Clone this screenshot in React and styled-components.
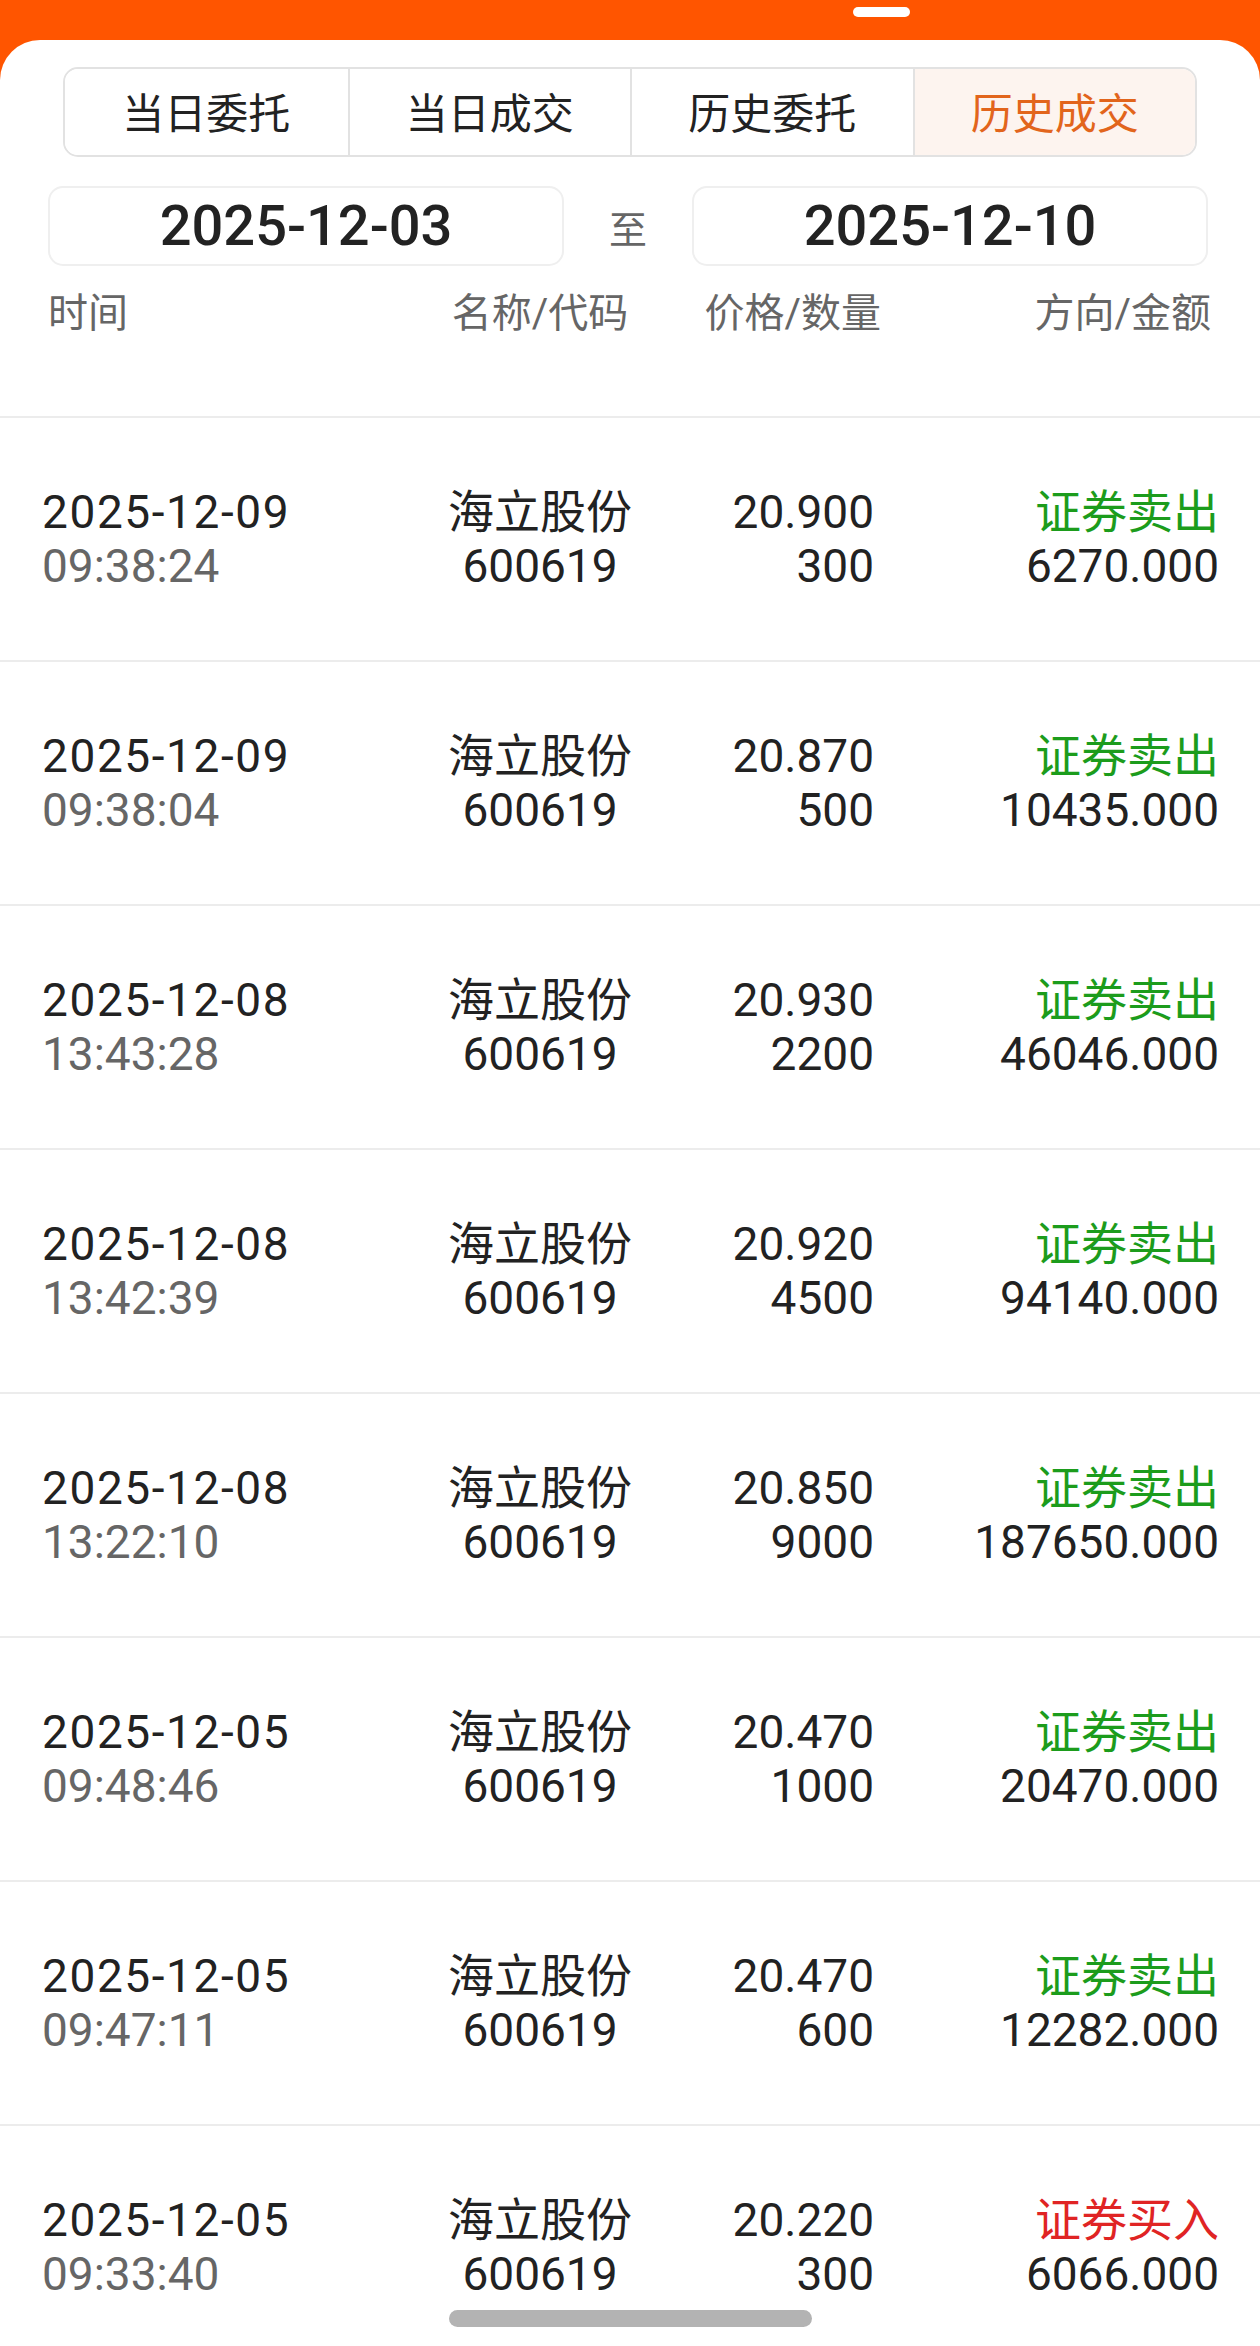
import styled, { createGlobalStyle } from 'styled-components';

const GlobalStyle = createGlobalStyle`
  html, body {
    margin: 0;
    padding: 0;
    height: 2346px;
    overflow: hidden;
    background: #ff5500;
  }
  * {
    box-sizing: border-box;
  }
`;

const Page = styled.div`
  font-family: Roboto, "Noto Sans CJK SC", sans-serif;
  width: 1260px;
  height: 2346px;
  overflow: hidden;
  background: #ff5500;
`;

const TopBar = styled.div`
  height: 40px;
  padding: 7px 0 0 853px;
`;

const Handle = styled.div`
  width: 57px;
  height: 10px;
  border-radius: 5px;
  background: #fff;
`;

const Card = styled.div`
  background: #fff;
  border-radius: 40px 40px 0 0;
  min-height: 2306px;
  padding-top: 27px;
`;

const Tabs = styled.div`
  margin: 0 63px;
  height: 90px;
  display: grid;
  grid-template-columns: repeat(4, 1fr);
  border: 2px solid #e2e2e2;
  border-radius: 15px;
  overflow: hidden;
`;

const Tab = styled.div`
  display: flex;
  align-items: center;
  justify-content: center;
  padding-bottom: 3px;
  font-size: 42px;
  color: ${p => (p.$active ? '#e2651c' : '#222')};
  background: ${p => (p.$active ? '#fdf4ef' : '#fff')};
  & + & {
    border-left: 2px solid #e2e2e2;
  }
`;

const DateRow = styled.div`
  margin: 29px 52px 0 48px;
  height: 80px;
  display: flex;
  align-items: center;
`;

const DateBox = styled.div`
  flex: 1;
  height: 80px;
  border: 2px solid #efefef;
  border-radius: 15px;
  display: flex;
  align-items: center;
  justify-content: center;
  font-size: 56px;
  font-weight: 500;
  color: #222;
`;

const To = styled.div`
  width: 128px;
  text-align: center;
  font-size: 38px;
  color: #666;
`;

const Header = styled.div`
  height: 152px;
  padding: 28px 49px 0 48px;
  display: grid;
  grid-template-columns: 372px 240px 221px 1fr;
  align-items: start;
  border-bottom: 2px solid #ececec;
  font-size: 40px;
  color: #666;
`;

const Cell = styled.div`
  text-align: ${p => p.$align || 'left'};
  line-height: ${p => p.$lh || '54px'};
`;

const Row = styled.div`
  height: 244px;
  padding: 0 41px 0 42px;
  display: grid;
  grid-template-columns: 378px 240px 214px 1fr;
  align-items: center;
  border-bottom: 2px solid #ececec;
  font-size: 46px;
  color: #222;
`;

const Day = styled.div`
  letter-spacing: 1.6px;
`;

const Sub = styled.div`
  color: ${p => p.$color || 'inherit'};
`;

const HomeBar = styled.div`
  position: fixed;
  left: 449px;
  bottom: 19px;
  width: 363px;
  height: 17px;
  border-radius: 9px;
  background: #b3b3b3;
`;

const trades = [
  ['2025-12-09', '09:38:24', '20.900', '300', 'sell', '6270.000'],
  ['2025-12-09', '09:38:04', '20.870', '500', 'sell', '10435.000'],
  ['2025-12-08', '13:43:28', '20.930', '2200', 'sell', '46046.000'],
  ['2025-12-08', '13:42:39', '20.920', '4500', 'sell', '94140.000'],
  ['2025-12-08', '13:22:10', '20.850', '9000', 'sell', '187650.000'],
  ['2025-12-05', '09:48:46', '20.470', '1000', 'sell', '20470.000'],
  ['2025-12-05', '09:47:11', '20.470', '600', 'sell', '12282.000'],
  ['2025-12-05', '09:33:40', '20.220', '300', 'buy', '6066.000'],
];

const tabs = ['当日委托', '当日成交', '历史委托', '历史成交'];

function App() {
  return (
    <Page>
      <GlobalStyle />
      <TopBar><Handle /></TopBar>
      <Card>
        <Tabs>
          {tabs.map((t, i) => (
            <Tab key={t} $active={i === 3}>{t}</Tab>
          ))}
        </Tabs>
        <DateRow>
          <DateBox>2025-12-03</DateBox>
          <To>至</To>
          <DateBox>2025-12-10</DateBox>
        </DateRow>
        <Header>
          <Cell $lh="40px">时间</Cell>
          <Cell $lh="40px" $align="center">名称/代码</Cell>
          <Cell $lh="40px" $align="right">价格/数量</Cell>
          <Cell $lh="40px" $align="right">方向/金额</Cell>
        </Header>
        {trades.map(([date, time, price, qty, dir, amount], i) => (
          <Row key={i}>
            <Cell>
              <Day>{date}</Day>
              <Sub $color="#666">{time}</Sub>
            </Cell>
            <Cell $align="center">
              <div>海立股份</div>
              <div>600619</div>
            </Cell>
            <Cell $align="right">
              <div>{price}</div>
              <div>{qty}</div>
            </Cell>
            <Cell $align="right">
              <Sub $color={dir === 'buy' ? '#e02424' : '#1c9c1c'}>
                {dir === 'buy' ? '证券买入' : '证券卖出'}
              </Sub>
              <div>{amount}</div>
            </Cell>
          </Row>
        ))}
      </Card>
      <HomeBar />
    </Page>
  );
}

export default App;
